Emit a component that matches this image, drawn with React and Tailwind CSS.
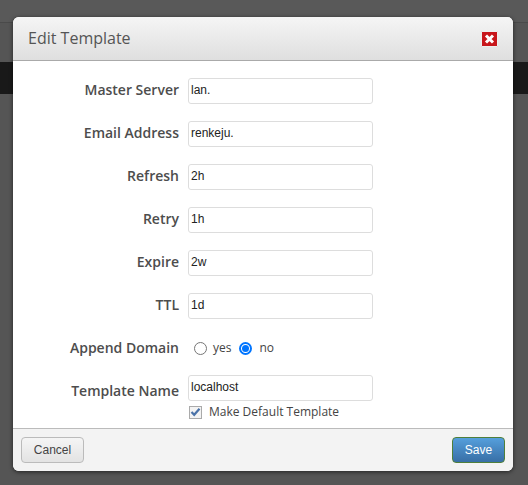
import React from "react";

const fields = [
  { label: "Master Server", value: "lan." },
  { label: "Email Address", value: "renkeju." },
  { label: "Refresh", value: "2h" },
  { label: "Retry", value: "1h" },
  { label: "Expire", value: "2w" },
  { label: "TTL", value: "1d" },
];

const Label = ({ children }) => (
  <label className="w-[166px] shrink-0 pb-[2px] text-right text-[14px] font-semibold leading-5 text-[#4d4d4d]">
    {children}
  </label>
);

const TextInput = ({ value }) => (
  <input
    readOnly
    value={value}
    className="block h-[26px] w-[185px] rounded-[3px] border border-[#ddd] bg-white pb-[2px] pl-[2px] pr-[3px] font-['Liberation_Sans',sans-serif] text-[12px] text-[#222] outline-none"
  />
);

const Radio = ({ checked }) =>
  checked ? (
    <span className="flex h-[13px] w-[13px] shrink-0 items-center justify-center rounded-full border-2 border-[#0075ff] bg-white">
      <span className="h-[7px] w-[7px] rounded-full bg-[#0075ff]" />
    </span>
  ) : (
    <span className="block h-[13px] w-[13px] shrink-0 rounded-full border border-[#767676] bg-white" />
  );

const App = () => {
  return (
    <div className="relative h-[485px] w-[528px] overflow-hidden bg-[#555] font-['Open_Sans',sans-serif]">
      {/* page behind the backdrop */}
      <div className="h-[23px] border-b border-[#4a4a4a] bg-[#595959]" />
      <div className="mt-[39px] h-[32px] bg-[#191919]" />

      <div className="absolute left-[13px] top-[17px] flex h-[454px] w-[500px] flex-col overflow-hidden rounded-[6px] bg-white shadow-[0_1px_4px_rgba(0,0,0,0.6)]">
        <div className="flex h-[44px] shrink-0 items-center justify-between border-b border-[#aaa] bg-gradient-to-b from-[#f5f5f5] to-[#dfdfdf] px-[15px]">
          <h3 className="pb-[2px] text-[16px] leading-5 text-[#555]">Edit Template</h3>
          <button className="flex h-[16px] w-[17px] items-center justify-center rounded-[1px] border border-[#eee] bg-[#c8161b]">
            <svg width="11" height="10" viewBox="0 0 11 10">
              <path d="M2 1.5 L9 8.5 M9 1.5 L2 8.5" stroke="#fff" strokeWidth="3" />
            </svg>
          </button>
        </div>

        <div className="flex min-h-0 flex-1 flex-col pt-[17px]">
          <div className="flex flex-col gap-[17px]">
            {fields.map((f) => (
              <div key={f.label} className="flex items-center gap-[9px]">
                <Label>{f.label}</Label>
                <TextInput value={f.value} />
              </div>
            ))}
          </div>

          <div className="mt-[17px] flex h-[26px] items-center gap-[9px]">
            <Label>Append Domain</Label>
            <div className="flex items-center pb-[2px] text-[12px] text-[#444]">
              <span className="ml-[6px]"><Radio /></span>
              <span className="ml-[6px]">yes</span>
              <span className="ml-[8px]"><Radio checked /></span>
              <span className="ml-[7px]">no</span>
            </div>
          </div>

          <div className="mt-[13px] flex items-start gap-[9px]">
            <div className="flex h-[34px] items-center">
              <Label>Template Name</Label>
            </div>
            <div>
              <TextInput value="localhost" />
              <div className="mt-[4px] flex items-center gap-[7px] pl-[1px]">
                <span className="flex h-[13px] w-[13px] items-center justify-center border border-[#aaa] bg-[#f3f3f3]">
                  <svg width="11" height="10" viewBox="0 0 11 10">
                    <path d="M1.5 5 L4.2 7.8 L9.5 1.8" fill="none" stroke="#4a72a8" strokeWidth="2.2" />
                  </svg>
                </span>
                <span className="text-[12px] leading-[14px] text-[#444]">Make Default Template</span>
              </div>
            </div>
          </div>
        </div>

        <div className="flex h-[43px] shrink-0 items-center justify-between border-t border-[#bbb] bg-[#f3f3f3] px-[8px]">
          <button className="h-[26px] w-[63px] rounded-[4px] border border-[#bbb] bg-gradient-to-b from-[#f5f5f5] to-[#e3e3e3] font-['Liberation_Sans',sans-serif] text-[12px] text-[#444]">
            Cancel
          </button>
          <button className="h-[26px] w-[53px] rounded-[4px] border border-[#4f7f3a] bg-gradient-to-b from-[#559fdc] to-[#386fa6] font-['Liberation_Sans',sans-serif] text-[12px] text-white">
            Save
          </button>
        </div>
      </div>
    </div>
  );
};

export default App;
